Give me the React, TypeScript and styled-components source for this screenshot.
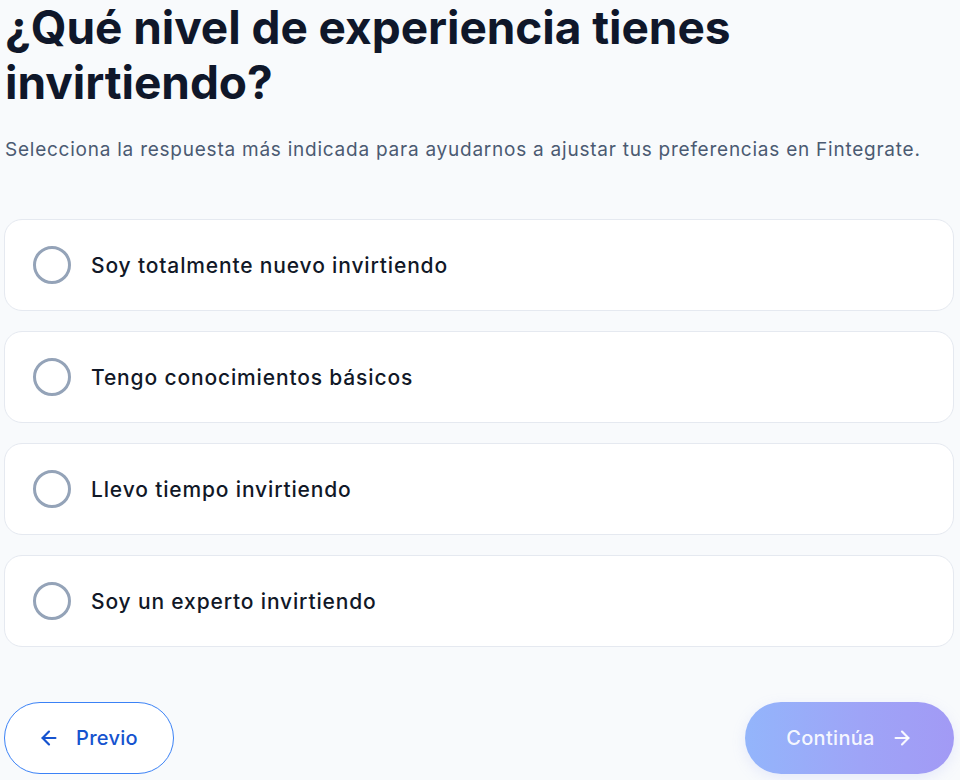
import React from "react";
import styled, { createGlobalStyle } from "styled-components";

const Global = createGlobalStyle`
  html, body { margin: 0; padding: 0; background: #f8fafc; }
  body { font-family: Inter, "Noto Sans", sans-serif; -webkit-font-smoothing: antialiased; }
`;

const Page = styled.main`
  display: flex;
  flex-direction: column;
  padding: 0 6px 0 4px;
  min-height: 780px;
  box-sizing: border-box;
`;

const Title = styled.h1`
  margin: 0 0 0 1px;
  font-size: 46px;
  line-height: 55px;
  font-weight: 700;
  letter-spacing: -0.05px;
  color: #0f172a;
`;

const Subtitle = styled.p`
  margin: 26px 0 0 1px;
  font-size: 19px;
  line-height: 28px;
  color: #4b5a72;
  letter-spacing: 0.76px;
`;

const Options = styled.div`
  display: flex;
  flex-direction: column;
  gap: 20px;
  margin-top: 55px;
`;

const Option = styled.label`
  display: flex;
  align-items: center;
  gap: 20px;
  height: 92px;
  box-sizing: border-box;
  padding: 0 28px;
  background: #ffffff;
  border: 1px solid #e5e9f0;
  border-radius: 18px;
  cursor: pointer;
`;

const Radio = styled.span`
  width: 38px;
  height: 38px;
  box-sizing: border-box;
  border: 3px solid #94a3b8;
  border-radius: 50%;
  flex-shrink: 0;
`;

const OptionText = styled.span`
  font-size: 21px;
  font-weight: 500;
  color: #111827;
  letter-spacing: 0.85px;
`;

const Footer = styled.div`
  display: flex;
  justify-content: space-between;
  align-items: center;
  margin-top: 55px;
`;

const Button = styled.button<{ $primary?: boolean }>`
  display: inline-flex;
  align-items: center;
  justify-content: center;
  gap: 16px;
  height: 72px;
  border-radius: 36px;
  font-family: Inter, sans-serif;
  font-size: 20px;
  font-weight: 500;
  letter-spacing: 0.3px;
  cursor: pointer;
  box-sizing: border-box;
  ${(p) =>
    p.$primary
      ? `
    width: 209px;
    border: none;
    color: rgba(255,255,255,0.92);
    background: linear-gradient(90deg, #93b5fb 0%, #9ea4f7 55%, #a29af5 100%);
    box-shadow: 0 4px 14px rgba(148, 163, 244, 0.18);
  `
      : `
    width: 170px;
    border: 1.5px solid #3b82f6;
    color: #1553cf;
    background: #ffffff;
    padding-right: 8px;
  `}
`;

const Arrow = ({ dir }: { dir: "left" | "right" }) => (
  <svg width="22" height="22" viewBox="0 0 24 24" fill="none" stroke="currentColor" strokeWidth="2.4" strokeLinecap="round" strokeLinejoin="round">
    {dir === "left" ? (
      <>
        <path d="M19 12H5" />
        <path d="M12 19l-7-7 7-7" />
      </>
    ) : (
      <>
        <path d="M5 12h14" />
        <path d="M12 5l7 7-7 7" />
      </>
    )}
  </svg>
);

const options = [
  "Soy totalmente nuevo invirtiendo",
  "Tengo conocimientos básicos",
  "Llevo tiempo invirtiendo",
  "Soy un experto invirtiendo",
];

export default function App() {
  return (
    <>
      <Global />
      <Page>
        <Title>
          ¿Qué nivel de experiencia tienes
          <br />
          invirtiendo?
        </Title>
        <Subtitle>
          Selecciona la respuesta más indicada para ayudarnos a ajustar tus preferencias en Fintegrate.
        </Subtitle>
        <Options>
          {options.map((o) => (
            <Option key={o}>
              <Radio />
              <OptionText>{o}</OptionText>
            </Option>
          ))}
        </Options>
        <Footer>
          <Button>
            <Arrow dir="left" />
            Previo
          </Button>
          <Button $primary>
            Continúa
            <Arrow dir="right" />
          </Button>
        </Footer>
      </Page>
    </>
  );
}
